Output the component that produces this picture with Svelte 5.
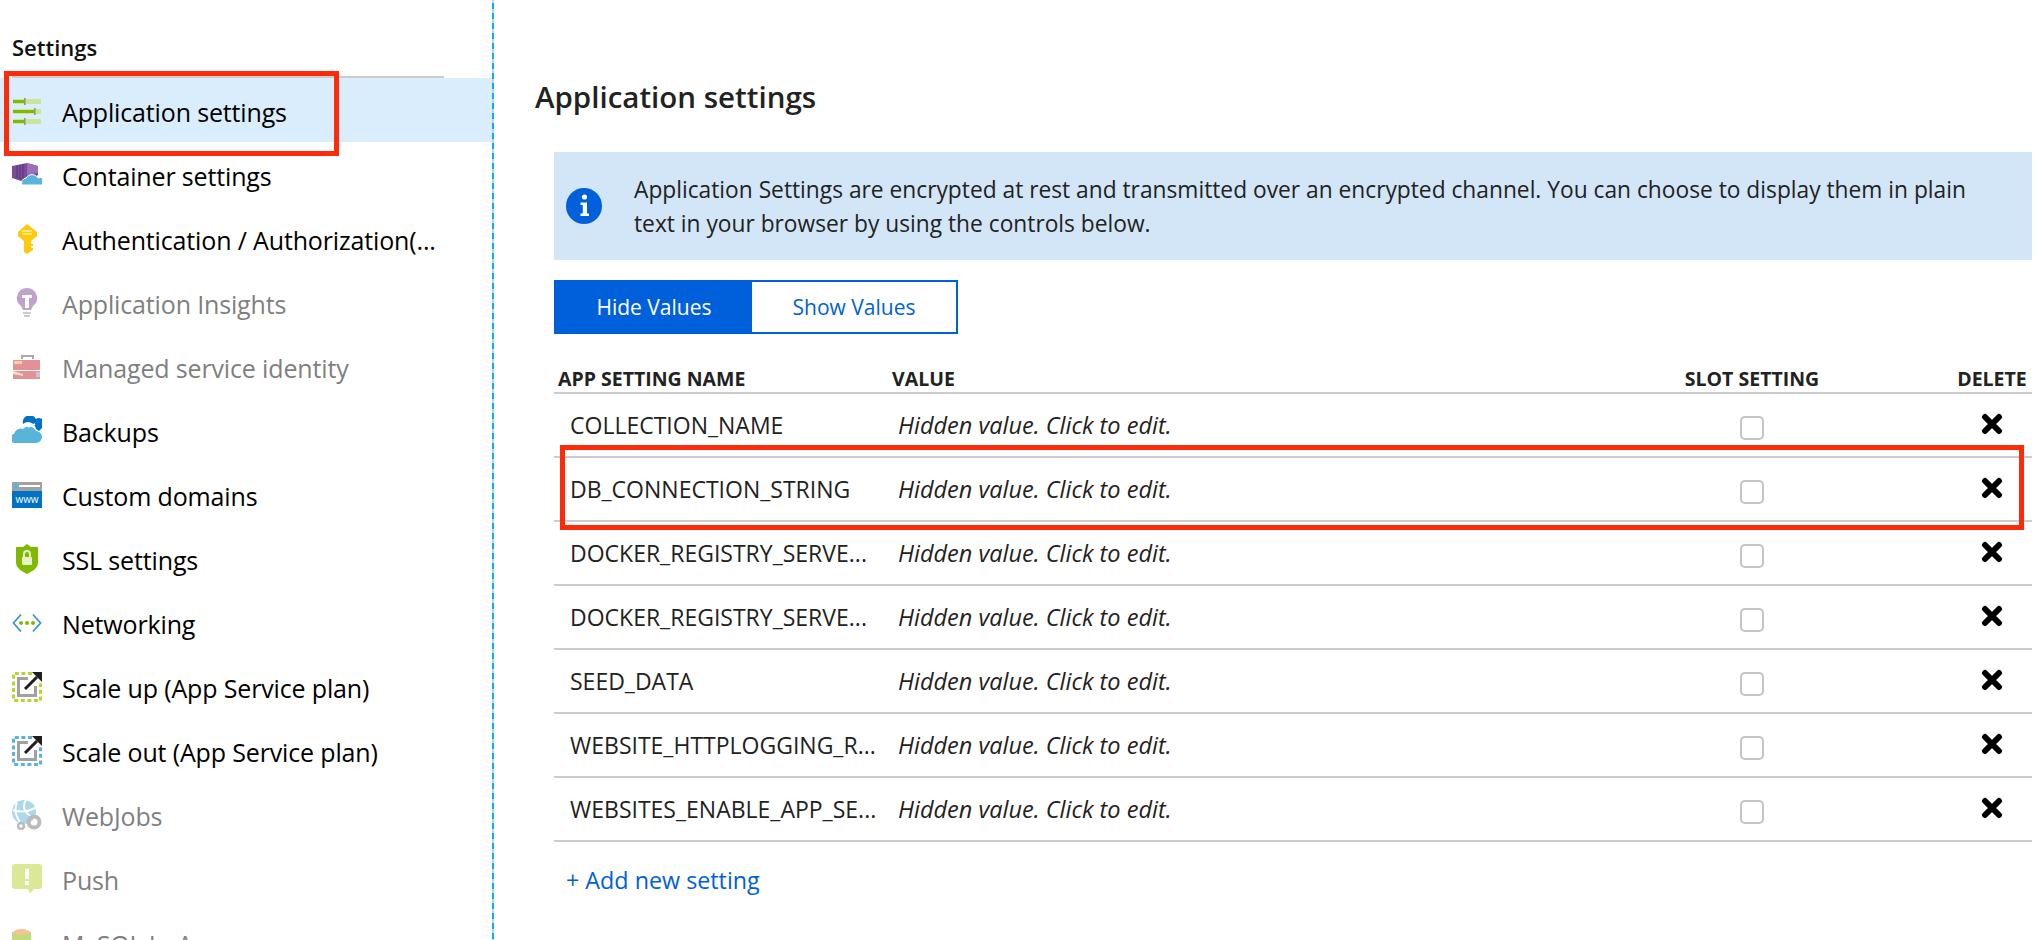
<script lang="ts">
	type NavItem = { label: string; icon: string; disabled?: boolean; active?: boolean };

	const navItems: NavItem[] = [
		{ label: 'Application settings', icon: 'sliders', active: true },
		{ label: 'Container settings', icon: 'container' },
		{ label: 'Authentication / Authorization(...', icon: 'key' },
		{ label: 'Application Insights', icon: 'bulb', disabled: true },
		{ label: 'Managed service identity', icon: 'toolbox', disabled: true },
		{ label: 'Backups', icon: 'backup' },
		{ label: 'Custom domains', icon: 'www' },
		{ label: 'SSL settings', icon: 'shield' },
		{ label: 'Networking', icon: 'network' },
		{ label: 'Scale up (App Service plan)', icon: 'scaleup' },
		{ label: 'Scale out (App Service plan)', icon: 'scaleout' },
		{ label: 'WebJobs', icon: 'webjobs', disabled: true },
		{ label: 'Push', icon: 'push', disabled: true },
		{ label: 'MySQL In App', icon: 'mysql', disabled: true }
	];

	const settings = [
		'COLLECTION_NAME',
		'DB_CONNECTION_STRING',
		'DOCKER_REGISTRY_SERVE...',
		'DOCKER_REGISTRY_SERVE...',
		'SEED_DATA',
		'WEBSITE_HTTPLOGGING_R...',
		'WEBSITES_ENABLE_APP_SE...'
	];
</script>

<div class="page">
	<aside class="sidebar">
		<div class="side-title">Settings</div>
		<ul class="nav">
			{#each navItems as item}
				<li class="nav-item" class:active={item.active} class:disabled={item.disabled}>
					<svg class="nav-icon" viewBox="0 0 30 30" aria-hidden="true">
						{#if item.icon === 'sliders'}
							<rect x="1" y="3" width="28" height="5" fill="#cbe39a" />
							<rect x="1" y="4" width="11" height="3" fill="#7fba00" />
							<rect x="12" y="2" width="1.6" height="7" fill="#8a9a80" />
							<rect x="1" y="13" width="28" height="5" fill="#cbe39a" />
							<rect x="1" y="14" width="21" height="3" fill="#7fba00" />
							<rect x="22" y="12" width="1.6" height="7" fill="#8a9a80" />
							<rect x="1" y="23" width="28" height="5" fill="#cbe39a" />
							<rect x="1" y="24" width="11" height="3" fill="#7fba00" />
							<rect x="12" y="22" width="1.6" height="7" fill="#8a9a80" />
						{:else if item.icon === 'container'}
							<path d="M0 6 L15 3 L26 6 L26 15 L15 23 L0 18 Z" fill="#7a4c9c" />
							<path d="M15 3 L26 6 L26 13 L15 15 Z" fill="#9a6fb5" />
							<path d="M5 6 V19 M8 5 V20 M11 4 V21" stroke="#5b3576" stroke-width="1" />
							<path d="M10 25 a5 5 0 0 1 4 -7 a7 7 0 0 1 12 0 a4 4 0 0 1 4 7 Z" fill="#59b4d9" stroke="#fff" stroke-width="1" />
						{:else if item.icon === 'key'}
							<path d="M15 0 L25 8 V12 L19 17 V20 H21 V22 H19 V24 H21 V26 L15 30 L12 28 V17 L6 12 V8 Z" fill="#ffc90e" />
							<path d="M10 7 H20 M10 10 H20" stroke="#fff0a8" stroke-width="1.5" />
						{:else if item.icon === 'bulb'}
							<path d="M15 0 a10 10 0 0 1 6 18 L19 22 H11 L9 18 A10 10 0 0 1 15 0 Z" fill="#804998" />
							<path d="M10 7 H20 V10 H17 V20 H13 V10 H10 Z" fill="#fff" />
							<path d="M11 25 H19 M12 28 H18" stroke="#999" stroke-width="2" />
						{:else if item.icon === 'toolbox'}
							<path d="M10 7 V4 H21 V7" fill="none" stroke="#555" stroke-width="2" />
							<rect x="1" y="8" width="27" height="10" fill="#c2272d" />
							<rect x="1" y="19" width="27" height="8" fill="#c2272d" />
							<rect x="2" y="9" width="8" height="3" fill="#f2a24a" />
							<path d="M1 19 L11 22 V24 L1 22 Z" fill="#f9c79a" />
							<rect x="24" y="20" width="4" height="5" fill="#9a80c8" />
						{:else if item.icon === 'backup'}
							<path d="M3 27 a4 4 0 0 1 -1 -9 a7 7 0 0 1 9 -5 a8 8 0 0 1 13 2 a6 6 0 0 1 0 12 Z" fill="#59b4d9" />
							<path d="M11 8 a7 7 0 0 1 13 -5 a5 5 0 0 1 6 9 l-3 3 l-3 -2 a8 8 0 0 0 -13 -5 Z" fill="#0072c6" />
							<path d="M16 11 L23 8" stroke="#fff" stroke-width="1.5" />
						{:else if item.icon === 'www'}
							<rect x="0" y="2" width="30" height="10" fill="#a0a1a2" />
							<rect x="0" y="11" width="30" height="17" fill="#0072c6" />
							<rect x="7" y="5" width="21" height="2" fill="#fff" />
							<circle cx="4" cy="6" r="2.5" fill="#59b4d9" />
							<text x="15" y="23" class="www-text" text-anchor="middle">www</text>
						{:else if item.icon === 'shield'}
							<path d="M15 0 L19 3 H26 V19 Q26 25 15 30 Q4 25 4 19 V3 H11 Z" fill="#7fba00" />
							<rect x="10" y="13" width="10" height="8" rx="1" fill="#e6f3c4" />
							<path d="M12 13 V10 a3 3 0 0 1 6 0 V13" fill="none" stroke="#e6f3c4" stroke-width="2" />
						{:else if item.icon === 'network'}
							<path d="M9 6.5 L1.5 15 L9 23.5 M21 6.5 L28.5 15 L21 23.5" fill="none" stroke="#3999c6" stroke-width="1.8" />
							<circle cx="9" cy="15" r="2" fill="#7fba00" />
							<circle cx="15" cy="15" r="2" fill="#7fba00" />
							<circle cx="21" cy="15" r="2" fill="#7fba00" />
						{:else if item.icon === 'scaleup' || item.icon === 'scaleout'}
							<path d="M20 1.5 H1.5 V28.5 H28.5 V10" fill="none" stroke={item.icon === 'scaleup' ? '#b8d432' : '#59b4d9'} stroke-width="3" stroke-dasharray="4 2.6" />
							<path d="M16 6.5 H6.5 V23.5 H23.5 V14" fill="none" stroke="#a0a1a2" stroke-width="3" />
							<path d="M13 17 L25 5" stroke="#1e1e1e" stroke-width="3" />
							<path d="M20 0 H30 V10 Z" fill="#1e1e1e" />
						{:else if item.icon === 'webjobs'}
							<circle cx="12" cy="12" r="12" fill="#59b4d9" />
							<path d="M5 3 Q1 12 8 22 M14 0 Q8 10 20 17 M1 10 Q12 14 23 8" fill="none" stroke="#fff" stroke-width="2" />
							<circle cx="22" cy="22" r="5.5" fill="none" stroke="#7a7a7a" stroke-width="4" />
							<circle cx="9" cy="26" r="3" fill="none" stroke="#7a7a7a" stroke-width="2.5" />
						{:else if item.icon === 'push'}
							<path d="M3 0 H27 a3 3 0 0 1 3 3 V22 a3 3 0 0 1 -3 3 H22 L18 30 L16 25 H3 a3 3 0 0 1 -3 -3 V3 a3 3 0 0 1 3 -3 Z" fill="#b8d432" />
							<rect x="13" y="5" width="4" height="10" fill="#fff" />
							<rect x="13" y="17" width="4" height="4" fill="#fff" />
						{:else if item.icon === 'mysql'}
							<rect x="0" y="4" width="19" height="26" fill="#7fba00" />
							<ellipse cx="9.5" cy="4" rx="8" ry="3" fill="#f28b1e" />
						{/if}
					</svg>
					<span class="nav-label">{item.label}</span>
				</li>
			{/each}
		</ul>
		<div class="highlight nav-highlight"></div>
	</aside>

	<main class="content">
		<h1>Application settings</h1>

		<div class="info">
			<svg class="info-icon" viewBox="0 0 36 36" aria-hidden="true">
				<ellipse cx="18" cy="18" rx="18" ry="18" fill="#005fdb" />
				<circle cx="18.5" cy="9" r="2.6" fill="#fff" />
				<path d="M14.5 14.5 H21 V25.5 H23 V28 H14.5 V25.5 H16.8 V17 H14.5 Z" fill="#fff" />
			</svg>
			<p>Application Settings are encrypted at rest and transmitted over an encrypted channel. You can choose to display them in plain text in your browser by using the controls below.</p>
		</div>

		<div class="toggle">
			<button class="on">Hide Values</button>
			<button>Show Values</button>
		</div>

		<div class="table">
			<div class="row head">
				<div class="head-name">APP SETTING NAME</div>
				<div>VALUE</div>
				<div class="center">SLOT SETTING</div>
				<div class="center">DELETE</div>
			</div>
			{#each settings as name}
				<div class="row">
					<div class="name">{name}</div>
					<div class="value">Hidden value. Click to edit.</div>
					<div class="center"><span class="check"></span></div>
					<div class="center">
						<svg class="del" viewBox="0 0 22 22" aria-hidden="true">
							<path d="M4 4 L18 18 M18 4 L4 18" stroke="#000" stroke-width="6" stroke-linecap="round" />
						</svg>
					</div>
				</div>
			{/each}
			<div class="highlight row-highlight"></div>
		</div>

		<div class="add">+ Add new setting</div>
	</main>
</div>

<style>
	:global(body) {
		background: #fff;
	}

	.page {
		display: flex;
		height: 940px;
		overflow: hidden;
		font-family: 'Open Sans', 'Noto Sans', sans-serif;
		color: #000;
	}

	/* the divider alternates blue and grey dashes */
	.sidebar {
		position: relative;
		width: 492px;
		flex: none;
		padding-right: 2px;
		background: repeating-linear-gradient(to bottom, #d0d0d0 0 3px, #00b4f0 3px 9px, #d0d0d0 9px 10px) right top / 2px 100% no-repeat;
	}

	.side-title {
		height: 76px;
		box-sizing: border-box;
		padding: 33px 0 0 12px;
		font-size: 22px;
		line-height: 28px;
		font-weight: 600;
		color: #111;
	}

	.nav {
		list-style: none;
		margin: 0;
		padding: 0;
	}

	.nav::before {
		content: '';
		display: block;
		height: 2px;
		margin: 0 48px 0 12px;
		background: #ccc;
	}

	.nav-item {
		display: flex;
		align-items: center;
		height: 64px;
		box-sizing: border-box;
		padding: 4px 0 0 12px;
		gap: 20px;
		font-size: 25px;
		letter-spacing: -0.15px;
	}

	.nav-item.active {
		background: #daedfd;
	}

	.nav-item.disabled {
		color: #7f7f7f;
	}

	.nav-item.disabled .nav-icon {
		opacity: 0.5;
	}

	.nav-icon {
		width: 30px;
		height: 30px;
		flex: none;
		margin-top: -2px;
	}

	.nav-label {
		white-space: nowrap;
	}

	.www-text {
		font-size: 10px;
		fill: #fff;
	}

	.highlight {
		position: absolute;
		box-sizing: border-box;
		border: 5px solid #ff2a0a;
		pointer-events: none;
	}

	.nav-highlight {
		left: 4px;
		top: 71px;
		width: 335px;
		height: 85px;
	}

	.content {
		flex: 1;
		min-width: 0;
		padding: 0 10px 0 41px;
	}

	h1 {
		margin: 0;
		padding: 78px 0 0;
		font-size: 29.5px;
		line-height: 38px;
		font-weight: 600;
		color: #222;
	}

	.info {
		display: flex;
		align-items: center;
		height: 108px;
		margin: 36px 0 0 19px;
		padding: 2px 40px 0 12px;
		background: #d2e6f7;
		box-sizing: border-box;
	}

	.info-icon {
		width: 36px;
		height: 36px;
		flex: none;
		margin: -2px 32px 0 0;
	}

	.info p {
		margin: 0;
		font-size: 22.75px;
		line-height: 34px;
		color: #222;
	}

	.toggle {
		display: flex;
		margin: 20px 0 0 19px;
		width: 404px;
		height: 54px;
		box-sizing: border-box;
		border: 2px solid #005fdb;
	}

	.toggle button {
		flex: 1;
		padding: 0;
		border: 0;
		background: #fff;
		color: #005fdb;
		font: inherit;
		font-size: 21px;
	}

	.toggle button.on {
		flex: none;
		width: 196px;
		background: #005fdb;
		color: #fff;
	}

	.table {
		position: relative;
		margin: 26px 0 0 19px;
	}

	.row {
		display: grid;
		grid-template-columns: 338px 1fr 400px 80px;
		align-items: center;
		height: 64px;
		box-sizing: border-box;
		border-bottom: 2px solid #ccc;
		font-size: 23px;
		color: #222;
	}

	.row.head {
		height: 34px;
		padding-top: 5px;
		font-size: 19.5px;
		font-weight: 700;
	}

	.head-name {
		padding-left: 4px;
	}

	.center {
		text-align: center;
	}

	.name {
		padding-left: 16px;
		white-space: nowrap;
	}

	.value {
		padding-left: 6px;
		font-style: italic;
		font-size: 23.5px;
	}

	.check {
		display: block;
		width: 24px;
		height: 24px;
		box-sizing: border-box;
		margin: 6px auto 0;
		border: 2px solid #c4c4c4;
		border-radius: 5px;
	}

	.del {
		display: block;
		width: 22px;
		height: 22px;
		margin: -3px auto 0;
	}

	.row-highlight {
		left: 6px;
		top: 85px;
		width: 1464px;
		height: 85px;
	}

	.add {
		margin: 23px 0 0 31px;
		font-size: 23.3px;
		line-height: 30px;
		color: #005fdb;
	}
</style>
